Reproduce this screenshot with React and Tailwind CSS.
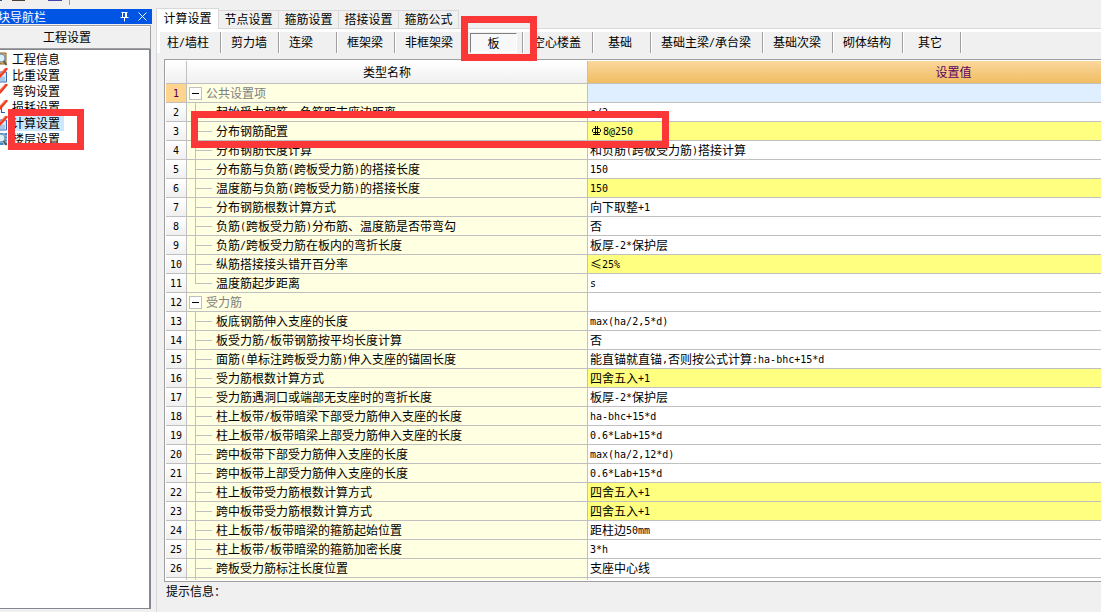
import React, { useState } from "react";

const navItems = [
  { name: "工程信息", icon: "search" },
  { name: "比重设置", icon: "check" },
  { name: "弯钩设置", icon: "hook" },
  { name: "损耗设置", icon: "chart" },
  { name: "计算设置", icon: "check" },
  { name: "楼层设置", icon: "floor" },
];

const tabs = ["计算设置", "节点设置", "箍筋设置", "搭接设置", "箍筋公式"];

const members = [
  { name: "柱/墙柱", width: "w-[61px] pl-[6px]" },
  { name: "剪力墙", width: "w-[58px] pl-[9px]" },
  { name: "连梁", width: "w-[58px] pl-[9px]" },
  { name: "框架梁", width: "w-[58px] pl-[9px]" },
  { name: "非框架梁", width: "w-[70px] pl-[9px]" },
  { name: "板", width: "w-[58px]" },
  { name: "空心楼盖", width: "w-[70px] pl-[9px]" },
  { name: "基础", width: "w-[58px] pl-[14px]" },
  { name: "基础主梁/承台梁", width: "w-[112px] pl-[9px]" },
  { name: "基础次梁", width: "w-[70px] pl-[9px]" },
  { name: "砌体结构", width: "w-[70px] pl-[9px]" },
  { name: "其它", width: "w-[58px] pl-[14px]" },
];

const groups = [
  {
    name: "公共设置项",
    rows: [
      { name: "起始受力钢筋、负筋距支座边距离", value: "s/2" },
      { name: "分布钢筋配置", value: "8@250", rebar: true, changed: true },
      { name: "分布钢筋长度计算", value: "和负筋(跨板受力筋)搭接计算" },
      { name: "分布筋与负筋(跨板受力筋)的搭接长度", value: "150" },
      { name: "温度筋与负筋(跨板受力筋)的搭接长度", value: "150", changed: true },
      { name: "分布钢筋根数计算方式", value: "向下取整+1" },
      { name: "负筋(跨板受力筋)分布筋、温度筋是否带弯勾", value: "否" },
      { name: "负筋/跨板受力筋在板内的弯折长度", value: "板厚-2*保护层" },
      { name: "纵筋搭接接头错开百分率", value: "≤25%", changed: true },
      { name: "温度筋起步距离", value: "s" },
    ],
  },
  {
    name: "受力筋",
    rows: [
      { name: "板底钢筋伸入支座的长度", value: "max(ha/2,5*d)" },
      { name: "板受力筋/板带钢筋按平均长度计算", value: "否" },
      {
        name: "面筋(单标注跨板受力筋)伸入支座的锚固长度",
        value: "能直锚就直锚,否则按公式计算:ha-bhc+15*d",
      },
      { name: "受力筋根数计算方式", value: "四舍五入+1", changed: true },
      { name: "受力筋遇洞口或端部无支座时的弯折长度", value: "板厚-2*保护层" },
      { name: "柱上板带/板带暗梁下部受力筋伸入支座的长度", value: "ha-bhc+15*d" },
      { name: "柱上板带/板带暗梁上部受力筋伸入支座的长度", value: "0.6*Lab+15*d" },
      { name: "跨中板带下部受力筋伸入支座的长度", value: "max(ha/2,12*d)" },
      { name: "跨中板带上部受力筋伸入支座的长度", value: "0.6*Lab+15*d" },
      { name: "柱上板带受力筋根数计算方式", value: "四舍五入+1", changed: true },
      { name: "跨中板带受力筋根数计算方式", value: "四舍五入+1", changed: true },
      { name: "柱上板带/板带暗梁的箍筋起始位置", value: "距柱边50mm" },
      { name: "柱上板带/板带暗梁的箍筋加密长度", value: "3*h" },
      { name: "跨板受力筋标注长度位置", value: "支座中心线" },
    ],
    open: true,
  },
];

// ascii runs get a half width face, the rest stays in the CJK font
const Label = ({ text }) =>
  text
    .split(/([\x20-\x7e]+)/)
    .filter(Boolean)
    .map((part, i) =>
      /^[\x20-\x7e]/.test(part) ? (
        <span
          key={i}
          className="font-['DejaVu_Sans_Mono',monospace] text-[10px] leading-none align-[1px]"
        >
          {part}
        </span>
      ) : (
        part
      )
    );

const Magnifier = () => (
  <>
    <circle cx="1" cy="7" r="4" fill="#d9f0fb" stroke="#7793ad" strokeWidth="1.3" />
    <path d="M3.5 10l3 4" stroke="#5b564f" strokeWidth="1.8" />
  </>
);

const NavIcon = ({ type }) => (
  <svg width="8" height="16" viewBox="0 0 8 16" fill="none" className="shrink-0">
    {type === "search" && (
      <>
        <path d="M0 2h6v11H0z" fill="#f0b64e" stroke="#94651d" />
        <Magnifier />
      </>
    )}
    {type === "floor" && (
      <>
        <path d="M0 2h7v12H0z" fill="#3f87cf" />
        <path d="M0 5h7M0 8h7M0 11h7M4 2v12" stroke="#d3e9fa" />
        <Magnifier />
      </>
    )}
    {type === "check" && (
      <path d="M0 5h6.500v10H0" fill="#d4e5f8" stroke="#3a6db5" />
    )}
    {type === "check" && <path d="M0 11h5M0 13h5" stroke="#7ea6d8" />}
    {type === "chart" && (
      <path d="M0 8h1.500v5.500H5" stroke="#2f5fa8" strokeWidth="1.2" />
    )}
    {(type === "check" || type === "hook" || type === "chart") && (
      <>
        <path d="M0 6.500L5 1h2.500v1.500L1.500 9.500 0 11z" fill="#ee3a1c" />
        <path d="M0 7.500L5.500 1.500" stroke="#fa8c6c" />
      </>
    )}
  </svg>
);

const Rebar = () => (
  <svg
    width="13"
    height="12"
    viewBox="0 0 13 12"
    fill="none"
    stroke="#000"
    className="shrink-0"
  >
    <path d="M5.500 1v9M7.500 1v9M3 9.500h7" />
    <path d="M3.500 3.500h6l1 1v2l-1 1h-6l-1-1v-2z" />
  </svg>
);

const NavPanel = () => {
  const [current, setCurrent] = useState("计算设置");

  return (
    <aside className="w-[152px] shrink-0 flex flex-col pb-[3px]">
      {/* TOOLBAR REMAINS */}
      <div className="h-[9px] flex items-start">
        <div className="w-[2px] h-px bg-[#2c5590]"></div>
        <div className="ml-[10px] w-[13px] h-px bg-[#4d4237]"></div>
        <div className="ml-[23px] w-[14px] h-px bg-[#4443b0]"></div>
        <div className="ml-[7px] w-px h-[5px] bg-[#a0a0a0]"></div>
      </div>

      {/* TITLE BAR */}
      <div className="h-[15px] bg-[#0055e5] text-white flex items-center overflow-hidden">
        <h2 className="-ml-[2px] flex-1 whitespace-nowrap leading-[15px]">
          块导航栏
        </h2>
        <button aria-label="固定" className="w-[9px] mr-[9px]">
          <svg width="9" height="10" viewBox="0 0 9 10" fill="none" stroke="#fff">
            <path d="M1.500 .5h6M2.500 .5v5M5.500 .5v5M6.500 .5v5M.5 5.500h8M4.500 5.500v4" />
          </svg>
        </button>
        <button aria-label="关闭" className="w-[9px] mr-[5px]">
          <svg width="9" height="9" viewBox="0 0 9 9" fill="none" stroke="#fff">
            <path d="M.5 .5l8 8M8.500 .5l-8 8" />
          </svg>
        </button>
      </div>

      <button className="mt-px mr-px h-6 border-y border-r border-[#a0a0a0] bg-[#f0f0f0] pr-4 leading-[20px] shadow-[inset_0_1px_0_#fff]">
        工程设置
      </button>

      {/* NAV LIST */}
      <ul className="flex-1 mr-px border-y border-r-2 border-[#828790] bg-white pt-px">
        {navItems.map((item) => (
          <li key={item.name} className="h-4">
            <button
              className="h-4 flex items-center space-x-1"
              onClick={() => setCurrent(item.name)}
            >
              <NavIcon type={item.icon} />
              <span
                className={`h-4 leading-[16px] pr-1 ${
                  current === item.name ? "bg-[#cce8ff]" : ""
                }`}
              >
                {item.name}
              </span>
            </button>
          </li>
        ))}
      </ul>
    </aside>
  );
};

const GroupRows = ({ group, start }) => {
  const [open, setOpen] = useState(true);
  const first = start === 1;
  const numCell =
    "h-[19px] p-0 border-b border-r border-[#c0c0c0] text-center font-normal";

  return (
    <>
      <tr>
        <th
          scope="row"
          className={`${numCell} ${
            first
              ? "bg-[#ffd58d] text-[#500050]"
              : "bg-linear-to-b from-white to-[#f0f0f0]"
          }`}
        >
          <Label text={String(start)} />
        </th>
        <td className="h-[19px] p-0 border-b border-r border-[#c0c0c0] bg-[#ffffe1]">
          <div className="h-[18px] pl-[2px] flex items-center space-x-1 text-[#808080]">
            <button
              aria-label={group.name}
              aria-expanded={open}
              onClick={() => setOpen(!open)}
              className="w-[13px] h-[13px] border border-[#c0c0c0] bg-white flex items-center justify-center"
            >
              <span className="w-[7px] h-px bg-black"></span>
            </button>
            <span className="leading-[18px]">{group.name}</span>
          </div>
        </td>
        <td
          className={`h-[19px] p-0 border-b border-[#c0c0c0] ${
            first ? "bg-[#dfefff]" : "bg-white"
          }`}
        ></td>
      </tr>

      {open &&
        group.rows.map((row, i) => (
          <tr key={row.name}>
            <th
              scope="row"
              className={`${numCell} bg-linear-to-b from-white to-[#f0f0f0]`}
            >
              <Label text={String(start + 1 + i)} />
            </th>
            <td className="h-[19px] p-0 border-b border-r border-[#c0c0c0] bg-[#ffffe1]">
              <div className="h-[18px] pl-2 flex items-center">
                <div
                  className={`w-[17px] border-l border-[#c0c0c0] ${
                    i === group.rows.length - 1 && !group.open
                      ? "self-start h-[10px]"
                      : "h-[18px]"
                  }`}
                >
                  <div className="h-[10px] border-b border-[#c0c0c0]"></div>
                </div>
                <div className="pl-1 leading-[18px] whitespace-nowrap">
                  <Label text={row.name} />
                </div>
              </div>
            </td>
            <td
              className={`h-[19px] p-0 border-b border-[#c0c0c0] ${
                row.changed ? "bg-[#ffff80]" : "bg-white"
              }`}
            >
              <div className="h-[18px] pl-[2px] flex items-center leading-[18px] whitespace-nowrap">
                {row.rebar && <Rebar />}
                <span>
                  <Label text={row.value} />
                </span>
              </div>
            </td>
          </tr>
        ))}
    </>
  );
};

const SettingsTable = () => (
  <div className="ml-[7px] mt-[6px] border-l border-y border-[#a0a0a0] bg-white pl-px py-px overflow-hidden">
    <table className="w-full table-fixed border-separate border-spacing-0">
      <colgroup>
        <col className="w-[21px]" />
        <col className="w-[401px]" />
        <col />
      </colgroup>
      <thead>
        <tr className="leading-[20px]">
          <th className="h-[23px] p-0 border-b border-r border-[#c0c0c0] bg-linear-to-b from-white to-[#f0f0f0]"></th>
          <th className="h-[23px] p-0 border-b border-r border-[#c0c0c0] font-normal bg-linear-to-b from-white to-[#f0f0f0]">
            类型名称
          </th>
          <th className="h-[23px] p-0 pl-[218px] border-b border-[#c0c0c0] font-normal text-[#600060] bg-linear-to-b from-[#fad79b] to-[#f0bd61]">
            设置值
          </th>
        </tr>
      </thead>
      <tbody>
        <GroupRows group={groups[0]} start={1} />
        <GroupRows group={groups[1]} start={12} />
        {/* next row is cut by the frame */}
        <tr>
          <td className="h-[2px] p-0 border-r border-[#c0c0c0]"></td>
          <td className="h-[2px] p-0 pl-2 border-r border-[#c0c0c0] bg-[#ffffe1]">
            <div className="h-[2px] border-l border-[#c0c0c0]"></div>
          </td>
          <td className="h-[2px] p-0"></td>
        </tr>
      </tbody>
    </table>
  </div>
);

const App = () => {
  const [tab, setTab] = useState("计算设置");
  const [member, setMember] = useState("板");

  return (
    <div className="relative min-h-screen flex overflow-hidden bg-[#f0f0f0] text-black text-[12px] leading-[16px] font-['Noto_Sans_CJK_SC','Liberation_Sans',sans-serif]">
      <NavPanel />

      <main className="flex-1 min-w-0 ml-1 pt-2 flex flex-col">
        {/* TABS */}
        <div role="tablist" className="flex items-end h-[21px]">
          {tabs.map((name) => (
            <button
              key={name}
              role="tab"
              aria-selected={tab === name}
              onClick={() => setTab(name)}
              className={`border-[#d9d9d9] whitespace-nowrap leading-[16px] pb-[2px] ${
                tab === name
                  ? "w-[63px] h-[21px] border-t border-x bg-white"
                  : "w-[60px] h-[19px] border-t border-r border-b"
              }`}
            >
              {name}
            </button>
          ))}
          <div className="flex-1 h-[19px] border-b border-[#d9d9d9]"></div>
        </div>

        <div className="flex-1 border-l border-[#d9d9d9]">
          {/* MEMBER BAR */}
          <div className="border-t-3 border-l-3 border-white">
            <div className="flex h-[21px]">
              {members.map((item) => (
                <div
                  key={item.name}
                  className={`${item.width} shrink-0 flex items-center border-r border-[#a0a0a0] shadow-[1px_0_0_#fff]`}
                >
                  <button
                    onClick={() => setMember(item.name)}
                    className={`whitespace-nowrap leading-[18px] pb-px ${
                      member === item.name
                        ? "w-[47px] h-5 mx-auto border border-t-[#808080] border-l-[#808080] border-b-white border-r-white bg-[#f8f8f8]"
                        : "pl-px"
                    }`}
                  >
                    <Label text={item.name} />
                  </button>
                </div>
              ))}
            </div>
          </div>

          <SettingsTable />

          <p className="pl-[9px] pt-px">提示信息：</p>
        </div>
      </main>

      {/* MARKS */}
      <div className="pointer-events-none absolute left-[461px] top-[16px] w-[76px] h-[45px] border-7 border-[#fb3737]"></div>
      <div className="pointer-events-none absolute left-[191px] top-[111px] w-[478px] h-[37px] border-7 border-[#fb3737]"></div>
      <div className="pointer-events-none absolute left-[8px] top-[109px] w-[76px] h-[41px] border-7 border-[#fb3737]"></div>
    </div>
  );
};

export default App;
